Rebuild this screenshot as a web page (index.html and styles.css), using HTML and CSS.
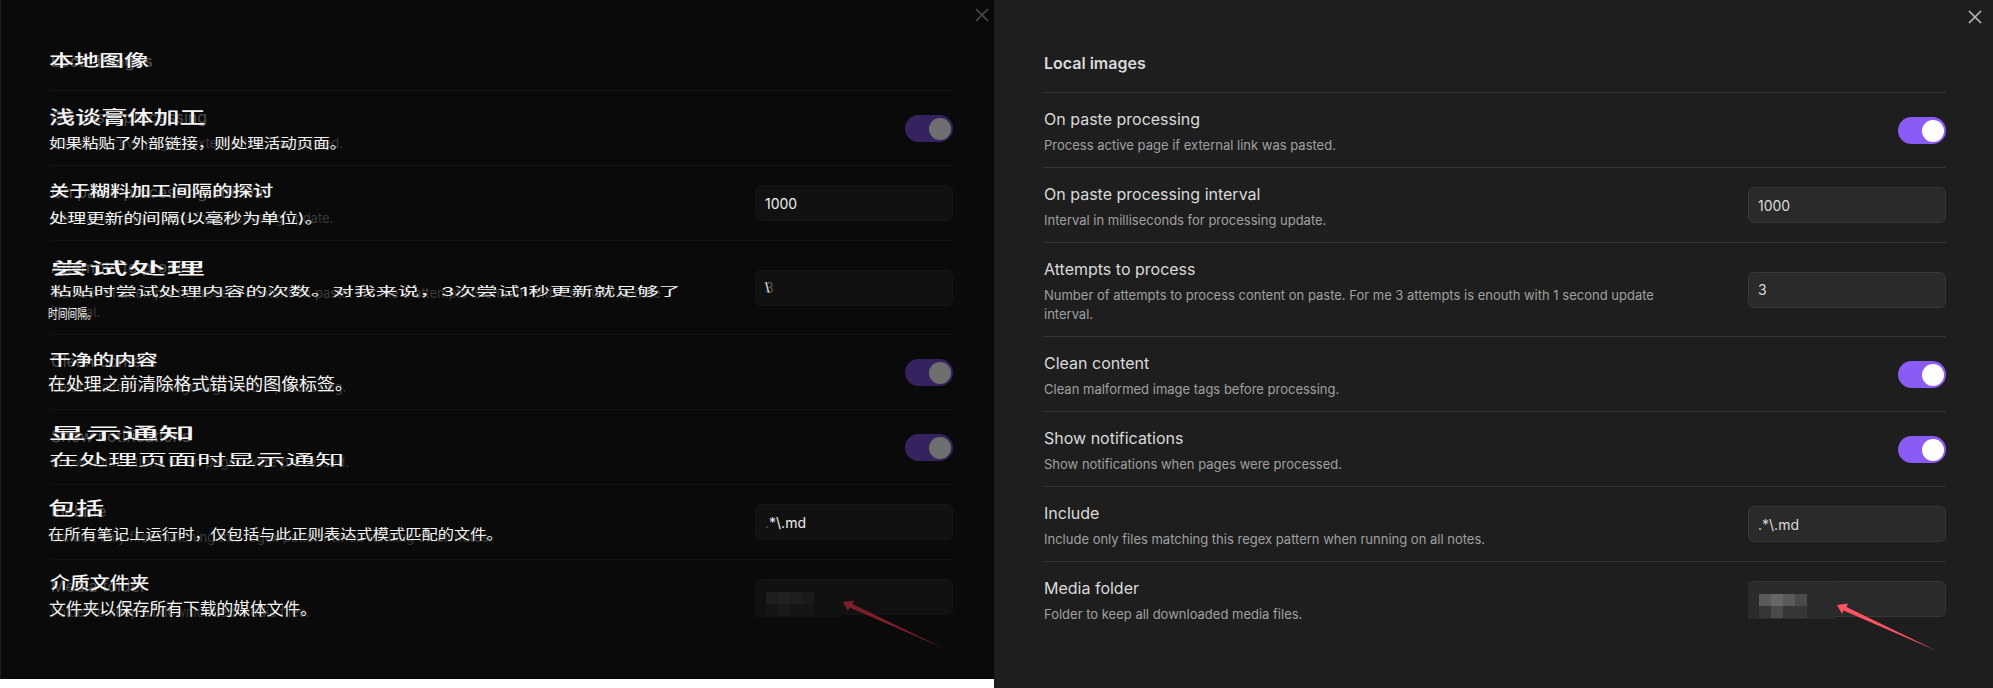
FILE: index.html
```html
<!DOCTYPE html>
<html lang="en">
<head>
  <meta charset="UTF-8">
  <meta name="viewport" content="width=device-width, initial-scale=1.0">
  <title>Local images settings</title>
  <link rel="stylesheet" href="styles.css">
</head>
<body>
  <!-- translated copy, dimmed -->
  <section class="panel panel-dim">
    <svg class="close" viewBox="0 0 14 14"><path d="M1 1l12 12M13 1L1 13"/></svg>
    <h2 class="heading">Local images<span class="zh zh-h">本地图像</span></h2>

    <div class="row">
      <div class="info">
        <div class="name">On paste processing<span class="zh zh-t1">浅谈膏体加工</span></div>
        <div class="desc">Process active page if external link was pasted.<span class="zh zh-d1">如果粘贴了外部链接，则处理活动页面。</span></div>
      </div>
      <div class="toggle"></div>
    </div>
    <div class="row">
      <div class="info">
        <div class="name">On paste processing interval<span class="zh zh-t2">关于糊料加工间隔的探讨</span></div>
        <div class="desc">Interval in milliseconds for processing update.<span class="zh zh-d2">处理更新的间隔(以毫秒为单位)。</span></div>
      </div>
      <div class="field"><span class="value">1000</span></div>
    </div>
    <div class="row">
      <div class="info">
        <div class="name">Attempts to process<span class="zh zh-t3">尝试处理</span></div>
        <div class="desc">Number of attempts to process content on paste. For me 3 attempts is enouth with 1 second update interval.<span class="zh zh-d3a">粘贴时尝试处理内容的次数。对我来说，3次尝试1秒更新就足够了</span><span class="zh zh-d3b">时间间隔。</span></div>
      </div>
      <div class="field"><span class="value ghost">3<span class="zh zh-v">\</span></span></div>
    </div>
    <div class="row">
      <div class="info">
        <div class="name">Clean content<span class="zh zh-t4">干净的内容</span></div>
        <div class="desc">Clean malformed image tags before processing.<span class="zh zh-d4">在处理之前清除格式错误的图像标签。</span></div>
      </div>
      <div class="toggle"></div>
    </div>
    <div class="row">
      <div class="info">
        <div class="name">Show notifications<span class="zh zh-t5">显示通知</span></div>
        <div class="desc">Show notifications when pages were processed.<span class="zh zh-d5">在处理页面时显示通知</span></div>
      </div>
      <div class="toggle"></div>
    </div>
    <div class="row">
      <div class="info">
        <div class="name">Include<span class="zh zh-t6">包括</span></div>
        <div class="desc">Include only files matching this regex pattern when running on all notes.<span class="zh zh-d6">在所有笔记上运行时，仅包括与此正则表达式模式匹配的文件。</span></div>
      </div>
      <div class="field"><span class="value"><span class="ghost">.</span>*\.md</span></div>
    </div>
    <div class="row">
      <div class="info">
        <div class="name">Media folder<span class="zh zh-t7">介质文件夹</span></div>
        <div class="desc">Folder to keep all downloaded media files.<span class="zh zh-d7">文件夹以保存所有下载的媒体文件。</span></div>
      </div>
      <div class="field">
        <div class="smudge">
          <div class="cells">
            <i class="c1"></i><i class="c2"></i><i class="c1"></i><i class="c3"></i>
            <i class="c4"></i><i class="c3"></i><i class="c4"></i><i class="c4"></i>
          </div>
        </div>
      </div>
    </div>

    <svg class="arrow" viewBox="0 0 110 56"><path d="M3 9L14 7.5 12.5 11 103 55 9.5 14.5 8 18z"/></svg>
  </section>

  <!-- original -->
  <section class="panel panel-main">
    <svg class="close" viewBox="0 0 14 14"><path d="M1 1l12 12M13 1L1 13"/></svg>
    <h2 class="heading">Local images</h2>

    <div class="row">
      <div class="info">
        <div class="name">On paste processing</div>
        <div class="desc">Process active page if external link was pasted.</div>
      </div>
      <div class="toggle"></div>
    </div>
    <div class="row">
      <div class="info">
        <div class="name">On paste processing interval</div>
        <div class="desc">Interval in milliseconds for processing update.</div>
      </div>
      <div class="field"><span class="value">1000</span></div>
    </div>
    <div class="row">
      <div class="info">
        <div class="name">Attempts to process</div>
        <div class="desc">Number of attempts to process content on paste. For me 3 attempts is enouth with 1 second update interval.</div>
      </div>
      <div class="field"><span class="value">3</span></div>
    </div>
    <div class="row">
      <div class="info">
        <div class="name">Clean content</div>
        <div class="desc">Clean malformed image tags before processing.</div>
      </div>
      <div class="toggle"></div>
    </div>
    <div class="row">
      <div class="info">
        <div class="name">Show notifications</div>
        <div class="desc">Show notifications when pages were processed.</div>
      </div>
      <div class="toggle"></div>
    </div>
    <div class="row">
      <div class="info">
        <div class="name">Include</div>
        <div class="desc">Include only files matching this regex pattern when running on all notes.</div>
      </div>
      <div class="field"><span class="value">.*\.md</span></div>
    </div>
    <div class="row">
      <div class="info">
        <div class="name">Media folder</div>
        <div class="desc">Folder to keep all downloaded media files.</div>
      </div>
      <div class="field">
        <div class="smudge">
          <div class="cells">
            <i class="c1"></i><i class="c2"></i><i class="c1"></i><i class="c3"></i>
            <i class="c4"></i><i class="c3"></i><i class="c4"></i><i class="c4"></i>
          </div>
        </div>
      </div>
    </div>

    <svg class="arrow" viewBox="0 0 110 56"><path d="M3 9L14 7.5 12.5 11 103 55 9.5 14.5 8 18z"/></svg>
  </section>
</body>
</html>
```

FILE: styles.css
```css
html, body {
  margin: 0;
  height: 688px;
  overflow: hidden;
  background: #fff;
}
body {
  display: flex;
  align-items: flex-start;
  font-family: Inter, "Noto Sans CJK SC", sans-serif;
}
.panel {
  position: relative;
  box-sizing: border-box;
  color: #dadada;
}
.heading {
  position: relative;
  margin: 0;
  padding-bottom: 17px;
  font-size: 16px;
  font-weight: 600;
  line-height: 24px;
}
.row {
  display: flex;
  align-items: center;
  justify-content: space-between;
  padding: 12px 0;
  border-top: 1px solid #363636;
}
.info {
  max-width: 640px;
}
.name {
  position: relative;
  font-size: 16px;
  line-height: 28px;
  margin-bottom: 3px;
}
.desc {
  position: relative;
  font-size: 13px;
  line-height: 19px;
  color: #a0a0a0;
}
.toggle {
  position: relative;
  width: 48px;
  height: 27px;
  border-radius: 14px;
  background: #8a5cf5;
}
.toggle::after {
  content: "";
  position: absolute;
  top: 3px;
  right: 2px;
  width: 22px;
  height: 22px;
  border-radius: 50%;
  background: #fff;
}
.field {
  position: relative;
  box-sizing: border-box;
  width: 198px;
  height: 36px;
  padding: 0 9px;
  display: flex;
  align-items: center;
  font-size: 14px;
  border: 1px solid #363636;
  border-radius: 6px;
  background: #2a2a2a;
}
.value {
  position: relative;
}
.smudge {
  position: absolute;
  left: -1px;
  top: 0;
  width: 87px;
  height: 37px;
  background: #2b2b2b;
}
.cells {
  position: absolute;
  left: 11px;
  top: 12px;
  display: grid;
  grid-template-columns: repeat(4, 12px);
  grid-auto-rows: 12px;
}
.c1 { background: #5a5a5a; }
.c2 { background: #666; }
.c3 { background: #4a4a4a; }
.c4 { background: #363636; }
.close {
  position: absolute;
  width: 14px;
  height: 14px;
  fill: none;
  stroke: #b8b8b8;
  stroke-width: 1.7;
}
.arrow {
  position: absolute;
  width: 110px;
  height: 56px;
  fill: #ff5263;
}

/* right panel */
.panel-main {
  flex: 1;
  height: 688px;
  padding: 51px 47px 0 50px;
  background: #1e1e1e;
}
.panel-main .close { top: 10px; left: 974px; }
.panel-main .arrow { left: 840px; top: 596px; }

/* left panel, same thing under a dark layer with the translation on top */
.panel-dim {
  width: 994px;
  height: 679px;
  padding: 49px 41px 0 50px;
  border-left: 1px solid #1e1e1e;
  background: #0a0a0a;
}
.panel-dim .close { top: 8px; left: 974px; stroke: #4a4a4a; }
.panel-dim .arrow { left: 839px; top: 593px; fill: #7a1f2b; }
.panel-dim .heading { color: #4a4a4a; }
.panel-dim .row { border-top-color: #141414; }
.panel-dim .name { color: #4c4c4c; }
.panel-dim .desc { color: #3a3a3a; }
.panel-dim .toggle { background: #35225f; }
.panel-dim .toggle::after { background: #6f6f6f; }
.panel-dim .field {
  color: #eee;
  border-color: #151515;
  background: #111;
}
.panel-dim .ghost { color: #555; }
.panel-dim .smudge { background: #111; }
.panel-dim .c1 { background: #1e1e1e; }
.panel-dim .c2 { background: #222; }
.panel-dim .c3 { background: #1a1a1a; }
.panel-dim .c4 { background: #151515; }

/* machine translated lines, stretched to the width of the english below */
.zh {
  position: absolute;
  left: -2px;
  white-space: nowrap;
  line-height: 1;
  font-weight: 500;
  color: #f4f4f4;
  transform-origin: left top;
}
.desc .zh { font-weight: 400; }
.zh-h { top: 3px; font-size: 16px; transform: scaleX(1.56); }
.zh-t1 { top: 6px; font-size: 18px; transform: scaleX(1.45); }
.zh-t2 { top: 5px; font-size: 15px; transform: scaleX(1.36); }
.zh-t3 { top: 7px; left: -1px; font-size: 16px; transform: scaleX(2.42); }
.zh-t4 { top: 5px; font-size: 15px; transform: scaleX(1.45); }
.zh-t5 { top: 3px; font-size: 16px; transform: scaleX(2.28); }
.zh-t6 { top: 3px; left: -3px; font-size: 18px; transform: scaleX(1.55); }
.zh-t7 { top: 3px; left: -1px; font-size: 17px; transform: scaleX(1.17); }
.zh-d1 { top: 2px; font-size: 14px; transform: scaleX(1.18); }
.zh-d2 { top: 2px; font-size: 14px; transform: scaleX(1.33); }
.zh-d3a { top: 2px; left: -1px; font-size: 12px; transform: scaleX(1.81); }
.zh-d3b { top: 23px; left: -3px; font-size: 13px; transform: scaleX(0.75); }
.zh-d4 { top: -2px; left: -3px; font-size: 17px; transform: scaleX(1.055); }
.zh-d5 { top: -1px; font-size: 15px; transform: scaleX(1.97); }
.zh-d6 { top: -1px; left: -3px; font-size: 14px; transform: scaleX(1.16); }
.zh-d7 { top: -2px; font-size: 17px; transform: scaleX(0.985); }
.zh-v { top: 2px; left: 0; font-size: 12px; }
```
